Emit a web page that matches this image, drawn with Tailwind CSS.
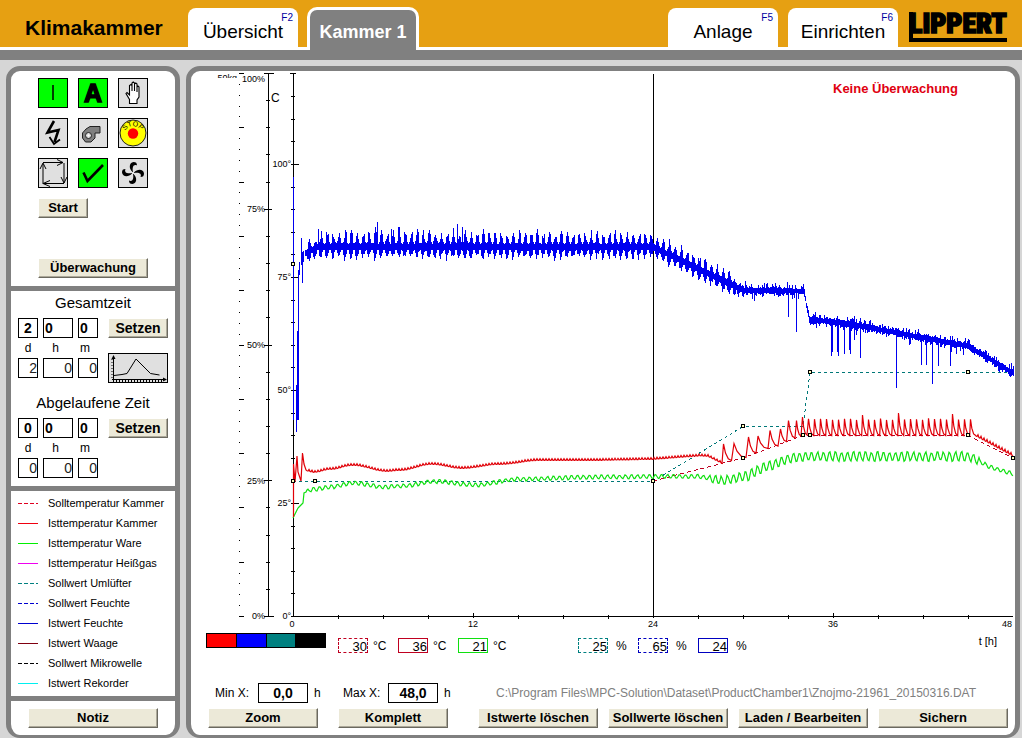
<!DOCTYPE html>
<html lang="de">
<head>
<meta charset="utf-8">
<title>Klimakammer</title>
<script src="https://cdn.jsdelivr.net/npm/@tailwindcss/browser@4"></script>
</head>
<body class="flex min-h-screen flex-col bg-[#d6d6d6] font-['Liberation_Sans',Arial,sans-serif] text-black">
<header class="flex h-[50px] items-end border-b-[3px] border-white bg-[#e6a012]">
  <h1 class="w-[188px] shrink-0 pb-[7px] pl-[25px] text-[21px] leading-6 font-bold">Klimakammer</h1>
  <nav class="flex flex-1 items-end">
    <a href="#uebersicht" class="relative h-[39px] w-[110px] rounded-t-lg bg-white pt-3 text-center text-[19px] leading-6">Übersicht<span class="absolute top-1 right-[5px] text-[10px] leading-3 text-[#0000a0]">F2</span></a>
    <a href="#kammer" aria-current="page" class="-mb-[3px] ml-[9px] h-[43px] w-[112px] rounded-t-[10px] border-3 border-b-0 border-white bg-[#808080] pt-[10px] text-center text-[18px] leading-6 font-bold text-white">Kammer 1</a>
    <a href="#anlage" class="relative ml-auto h-[39px] w-[110px] rounded-t-lg bg-white pt-3 text-center text-[19px] leading-6">Anlage<span class="absolute top-1 right-[5px] text-[10px] leading-3 text-[#0000a0]">F5</span></a>
    <a href="#einrichten" class="relative ml-[10px] h-[39px] w-[110px] rounded-t-lg bg-white pt-3 text-center text-[19px] leading-6">Einrichten<span class="absolute top-1 right-[5px] text-[10px] leading-3 text-[#0000a0]">F6</span></a>
  </nav>
  <svg class="mr-[14px] mb-[5px] ml-[11px] h-[34px] w-[99px] shrink-0 overflow-visible" viewBox="0 0 99 34" aria-label="Lippert">
    <text x="0" y="25" font-family="'Roboto Condensed','Open Sans Condensed','Liberation Sans Narrow','Liberation Sans',sans-serif" font-size="28" font-weight="900" stroke="#000" stroke-width="1.6">LIPPERT</text>
    <path d="M0 4h4v26h94v4H0z"/>
  </svg>
</header>
<div class="h-[10px] bg-[#808080]"></div>

<main class="flex flex-1 gap-[6px] pt-[6px] pr-[2px] pl-[6px]">
  <aside class="flex w-[174px] shrink-0 flex-col divide-y-5 divide-[#808080] rounded-[14px] border-5 border-b-3 border-[#808080] bg-white">
    <section class="px-[27px] pt-[7px] pb-2">
      <div class="grid w-[110px] grid-cols-3 gap-[10px]">
        <button aria-label="Ein" class="size-[30px] border border-black bg-[#00ff00]"><svg class="size-7" viewBox="0 0 28 28"><path d="M14 6v15" stroke="#000" stroke-width="1.5"/></svg></button>
        <button aria-label="Automatik" class="size-[30px] border border-black bg-[#00ff00]"><svg class="size-7" viewBox="0 0 28 28"><text x="14" y="23" text-anchor="middle" font-size="25" font-weight="bold" stroke="#000" stroke-width="1.500">A</text></svg></button>
        <button aria-label="Hand" class="size-[30px] border border-black bg-[#e0e0e0]"><svg class="size-7" viewBox="0 0 28 28"><path d="M10.500 24.500v-4L7 14.500l1-1 2.500 2.500V6.500l1.500-1 1 1V12V4l1.200-1L15.500 4v8V5l1.300-1L18 5v8V8l1-1 1 1v10l-2 3v3.500z" fill="#fff" stroke="#000" stroke-width="1.100"/></svg></button>
        <button aria-label="Spannung" class="size-[30px] border border-black bg-[#e0e0e0]"><svg class="size-7" viewBox="0 0 28 28" fill="none" stroke="#000" stroke-width="2.600"><path d="M15 2L8.500 13.500l11-2.500-4 12"/><path d="M10.500 18l4.500 7 6-4.500" stroke-width="1.800"/></svg></button>
        <button aria-label="Gebläse" class="size-[30px] border border-black bg-[#e0e0e0]"><svg class="size-7" viewBox="0 0 28 28"><path d="M7 10l4-2.500h10v6.500h-5v5l-4 4H6.500l-3-4v-5z" fill="#808080" stroke="#222"/><circle cx="9.500" cy="16.500" r="3" fill="#ddd" stroke="#222"/><circle cx="9.500" cy="16.500" r="1" fill="#fff"/></svg></button>
        <button aria-label="Stop" class="size-[30px] border border-black bg-[#e0e0e0]"><svg class="size-7" viewBox="0 0 28 28"><defs><path id="stopArc" d="M5.500 19a9 9 0 1 1 17 0"/></defs><circle cx="14" cy="14" r="13" fill="#ffff00" stroke="#222"/><circle cx="14" cy="14.500" r="5.200" fill="#ff0000"/><text font-size="7" font-family="Liberation Sans,sans-serif"><textPath href="#stopArc" startOffset="50%" text-anchor="middle">STOP</textPath></text></svg></button>
        <button aria-label="Umluft" class="size-[30px] border border-black bg-[#e0e0e0]"><svg class="size-7" viewBox="0 0 28 28" fill="none" stroke="#000"><path d="M4 25V5M1 10l3-6 3 6M4 3.500h20M18 .5l6 3-6 3M25 4v20M22 18l3 6 3-6M25 24.500H5M11 21.500l-7 3 7 3"/></svg></button>
        <button aria-label="Quittieren" class="size-[30px] border border-black bg-[#00ff00]"><svg class="size-7" viewBox="0 0 28 28"><path d="M4.500 13.500l4 8.500L24 6" fill="none" stroke="#000" stroke-width="2.600"/></svg></button>
        <button aria-label="Lüfter" class="size-[30px] border border-black bg-[#e0e0e0]"><svg class="size-7" viewBox="0 0 28 28"><path id="blade" d="M13.500 13C9.500 9.500 10 3.500 14.500 3c2.500 0 3.500 1 3.500 3.500-3.500-1.500-5 1.500-4 6.500z"/><use href="#blade" transform="rotate(90 14 14)"/><use href="#blade" transform="rotate(180 14 14)"/><use href="#blade" transform="rotate(270 14 14)"/></svg></button>
      </div>
      <button class="mt-[10px] block h-5 w-[50px] border border-t-white border-r-[#6b695f] border-b-[#6b695f] border-l-white bg-[#ece9d8] text-[13px] leading-4 font-bold shadow-[inset_-1px_-1px_#aca899]">Start</button>
      <button class="mt-10 block h-5 w-[110px] border border-t-white border-r-[#6b695f] border-b-[#6b695f] border-l-white bg-[#ece9d8] text-[13px] leading-4 font-bold shadow-[inset_-1px_-1px_#aca899]">Überwachung</button>
    </section>

    <section class="px-[7px] pt-1 pb-2">
      <h2 class="text-center text-[15px] leading-4">Gesamtzeit</h2>
      <div class="mt-[7px] flex h-5">
        <input aria-label="Gesamtzeit Tage" value="2" class="w-5 border border-black text-center text-[14px] leading-4 font-bold">
        <input aria-label="Gesamtzeit Stunden" value="0" class="ml-[5px] w-[30px] border border-black pl-px text-[14px] leading-4 font-bold">
        <input aria-label="Gesamtzeit Minuten" value="0" class="ml-[5px] w-5 border border-black pl-px text-[14px] leading-4 font-bold">
        <button class="ml-[10px] w-[60px] border border-t-white border-r-[#6b695f] border-b-[#6b695f] border-l-white bg-[#ece9d8] text-[14px] leading-4 font-bold shadow-[inset_-1px_-1px_#aca899]">Setzen</button>
      </div>
      <div class="flex">
        <div>
          <div class="flex h-5 items-center text-[12px]"><span class="w-5 text-center">d</span><span class="ml-[5px] w-[25px] text-center">h</span><span class="ml-[7px] w-5 text-center">m</span></div>
          <div class="flex h-5 text-right text-[14px] leading-[18px] text-[#222]">
            <output class="w-5 border border-black">2</output>
            <output class="ml-[5px] w-[30px] border border-black">0</output>
            <output class="ml-[5px] w-5 border border-black">0</output>
          </div>
        </div>
        <button aria-label="Kurve" class="mt-[15px] ml-[10px] h-[30px] w-[60px] border border-black bg-[#e0e0e0]"><svg class="h-7 w-[58px]" viewBox="0 0 58 28" fill="none" stroke="#000"><path d="M4.500 2v23M3 25.500h53"/><path d="M4 27h50" stroke-dasharray="1 2" stroke-width="2"/><path d="M3 5v20" stroke-dasharray="1 2"/><path d="M2.500 5l2-4 2 4zM54 23.500l4 2-4 2z" fill="#000" stroke="none"/><path d="M5 21.500l8-1 5-1 9-14.500 14.500 14.500 9 1.500"/></svg></button>
      </div>
      <h2 class="mt-3 text-center text-[15px] leading-4">Abgelaufene Zeit</h2>
      <div class="mt-[7px] flex h-5">
        <input aria-label="Abgelaufene Tage" value="0" class="w-5 border border-black text-center text-[14px] leading-4 font-bold">
        <input aria-label="Abgelaufene Stunden" value="0" class="ml-[5px] w-[30px] border border-black pl-px text-[14px] leading-4 font-bold">
        <input aria-label="Abgelaufene Minuten" value="0" class="ml-[5px] w-5 border border-black pl-px text-[14px] leading-4 font-bold">
        <button class="ml-[10px] w-[60px] border border-t-white border-r-[#6b695f] border-b-[#6b695f] border-l-white bg-[#ece9d8] text-[14px] leading-4 font-bold shadow-[inset_-1px_-1px_#aca899]">Setzen</button>
      </div>
      <div class="flex h-5 items-center text-[12px]"><span class="w-5 text-center">d</span><span class="ml-[5px] w-[25px] text-center">h</span><span class="ml-[7px] w-5 text-center">m</span></div>
      <div class="flex h-5 text-right text-[14px] leading-[18px] text-[#222]">
        <output class="w-5 border border-black">0</output>
        <output class="ml-[5px] w-[30px] border border-black">0</output>
        <output class="ml-[5px] w-5 border border-black">0</output>
      </div>
    </section>

    <section class="flex-1 px-[7px] pt-[2px] pb-[3px]">
      <ul class="text-[11px] leading-5">
        <li class="flex items-center gap-[10px]"><svg class="h-5 w-5" viewBox="0 0 20 20"><path d="M0 10.500h20" stroke="#e00020" stroke-dasharray="4 2"/></svg>Solltemperatur Kammer</li>
        <li class="flex items-center gap-[10px]"><svg class="h-5 w-5" viewBox="0 0 20 20"><path d="M0 10.500h20" stroke="#f00010"/></svg>Isttemperatur Kammer</li>
        <li class="flex items-center gap-[10px]"><svg class="h-5 w-5" viewBox="0 0 20 20"><path d="M0 10.500h20" stroke="#00f000"/></svg>Isttemperatur Ware</li>
        <li class="flex items-center gap-[10px]"><svg class="h-5 w-5" viewBox="0 0 20 20"><path d="M0 10.500h20" stroke="#f000f0"/></svg>Isttemperatur Heißgas</li>
        <li class="flex items-center gap-[10px]"><svg class="h-5 w-5" viewBox="0 0 20 20"><path d="M0 10.500h20" stroke="#008080" stroke-dasharray="4 2"/></svg>Sollwert Umlüfter</li>
        <li class="flex items-center gap-[10px]"><svg class="h-5 w-5" viewBox="0 0 20 20"><path d="M0 10.500h20" stroke="#0000d0" stroke-dasharray="4 2"/></svg>Sollwert Feuchte</li>
        <li class="flex items-center gap-[10px]"><svg class="h-5 w-5" viewBox="0 0 20 20"><path d="M0 10.500h20" stroke="#0000d0"/></svg>Istwert Feuchte</li>
        <li class="flex items-center gap-[10px]"><svg class="h-5 w-5" viewBox="0 0 20 20"><path d="M0 10.500h20" stroke="#800010"/></svg>Istwert Waage</li>
        <li class="flex items-center gap-[10px]"><svg class="h-5 w-5" viewBox="0 0 20 20"><path d="M0 10.500h20" stroke="#000" stroke-dasharray="4 2"/></svg>Sollwert Mikrowelle</li>
        <li class="flex items-center gap-[10px]"><svg class="h-5 w-5" viewBox="0 0 20 20"><path d="M0 10.500h20" stroke="#00f0f0"/></svg>Istwert Rekorder</li>
      </ul>
    </section>

    <section class="px-[17px] py-[7px]">
      <button class="block h-5 w-full border border-t-white border-r-[#6b695f] border-b-[#6b695f] border-l-white bg-[#ece9d8] text-[13px] leading-4 font-bold shadow-[inset_-1px_-1px_#aca899]">Notiz</button>
    </section>
  </aside>

  <section class="flex min-w-0 flex-1 flex-col rounded-[14px] border-5 border-b-3 border-[#808080] bg-white">
    <svg class="block w-full" viewBox="191 71 824 560" font-family="'Liberation Sans',Arial,sans-serif" font-size="9">
      <defs><clipPath id="topClip"><path d="M210 73h28v5h-28z"/></clipPath></defs>
      <g id="axes" shape-rendering="crispEdges" stroke="#000" fill="none"></g>
      <g text-anchor="end">
        <text x="237" y="81" clip-path="url(#topClip)">50kg</text>
        <text x="265" y="82">100%</text>
        <text x="265" y="212">75%</text>
        <text x="265" y="348">50%</text>
        <text x="265" y="484">25%</text>
        <text x="265" y="619">0%</text>
        <text x="291" y="167">100°</text>
        <text x="291" y="280">75°</text>
        <text x="291" y="393">50°</text>
        <text x="291" y="506">25°</text>
        <text x="291" y="619">0°</text>
      </g>
      <g text-anchor="middle">
        <text x="292" y="627">0</text>
        <text x="473" y="627">12</text>
        <text x="653" y="627">24</text>
        <text x="833" y="627">36</text>
        <text x="1007" y="627">48</text>
      </g>
      <text x="271" y="102" font-size="12">C</text>
      <text x="833" y="93" font-size="13" font-weight="bold" fill="#e00010">Keine Überwachung</text>
      <g id="curves" fill="none" stroke-width="1"></g>
      <g id="markers" fill="#ffffc0" stroke="#000" shape-rendering="crispEdges"></g>
    </svg>

    <div class="flex items-start pt-[2px] pr-[18px] pl-[15px]">
      <div class="flex h-[15px] w-[120px] divide-x divide-black border border-black">
        <i class="flex-1 bg-[#ff0000]"></i><i class="flex-1 bg-[#0000ff]"></i><i class="flex-1 bg-[#008080]"></i><i class="flex-1 bg-black"></i>
      </div>
      <div class="mt-[5px] ml-3 flex text-[12px] leading-4">
        <div class="flex w-[60px] gap-[5px]"><output class="h-[15px] w-[30px] border border-dashed border-[#c00020] text-right text-[13px]">30</output>°C</div>
        <div class="flex w-[60px] gap-[5px]"><output class="h-[15px] w-[30px] border border-[#c00020] text-right text-[13px]">36</output>°C</div>
        <div class="flex w-[60px] gap-[5px]"><output class="h-[15px] w-[30px] border border-[#10e010] text-right text-[13px]">21</output>°C</div>
        <div class="ml-[60px] flex w-[60px] gap-2"><output class="h-[15px] w-[30px] border border-dashed border-[#008080] text-right text-[13px]">25</output>%</div>
        <div class="flex w-[60px] gap-2"><output class="h-[15px] w-[30px] border border-dashed border-[#0000c0] text-right text-[13px]">65</output>%</div>
        <div class="flex w-[60px] gap-2"><output class="h-[15px] w-[30px] border border-[#0000c0] text-right text-[13px]">24</output>%</div>
      </div>
      <span class="mt-px ml-auto text-[11px] leading-[15px]">t [h]</span>
    </div>

    <div class="mt-[29px] flex h-5 items-center pr-6 pl-6 text-[12px]">
      <label for="minx" class="w-[43px]">Min X:</label>
      <input id="minx" value="0,0" class="h-5 w-[50px] border border-black text-center text-[14px] leading-4 font-bold">
      <span class="ml-[6px] w-[29px]">h</span>
      <label for="maxx" class="w-[45px]">Max X:</label>
      <input id="maxx" value="48,0" class="h-5 w-[50px] border border-black text-center text-[14px] leading-4 font-bold">
      <span class="ml-[6px]">h</span>
      <span class="ml-auto w-[495px] whitespace-nowrap text-[#808080]">C:\Program Files\MPC-Solution\Dataset\ProductChamber1\Znojmo-21961_20150316.DAT</span>
    </div>
    <div class="mt-[5px] flex h-5 pr-[7px] pl-[17px] text-[13px] font-bold whitespace-nowrap">
      <button class="w-[110px] border border-t-white border-r-[#6b695f] border-b-[#6b695f] border-l-white bg-[#ece9d8] leading-4 shadow-[inset_-1px_-1px_#aca899]">Zoom</button>
      <button class="ml-5 w-[110px] border border-t-white border-r-[#6b695f] border-b-[#6b695f] border-l-white bg-[#ece9d8] leading-4 shadow-[inset_-1px_-1px_#aca899]">Komplett</button>
      <button class="ml-auto w-[120px] border border-t-white border-r-[#6b695f] border-b-[#6b695f] border-l-white bg-[#ece9d8] leading-4 shadow-[inset_-1px_-1px_#aca899]">Istwerte löschen</button>
      <button class="ml-[10px] w-[120px] border border-t-white border-r-[#6b695f] border-b-[#6b695f] border-l-white bg-[#ece9d8] leading-4 shadow-[inset_-1px_-1px_#aca899]">Sollwerte löschen</button>
      <button class="ml-[10px] w-[130px] border border-t-white border-r-[#6b695f] border-b-[#6b695f] border-l-white bg-[#ece9d8] leading-4 shadow-[inset_-1px_-1px_#aca899]">Laden / Bearbeiten</button>
      <button class="ml-[10px] w-[130px] border border-t-white border-r-[#6b695f] border-b-[#6b695f] border-l-white bg-[#ece9d8] leading-4 shadow-[inset_-1px_-1px_#aca899]">Sichern</button>
    </div>
    <div class="h-[7px]"></div>
  </section>
</main>

<script>
const NS = 'http://www.w3.org/2000/svg';
function add(parent, d, attrs) {
  const p = document.createElementNS(NS, 'path');
  p.setAttribute('d', d);
  for (const k in attrs) p.setAttribute(k, attrs[k]);
  document.getElementById(parent).appendChild(p);
}
let seed = 7;
function rnd() { seed = (seed * 16807) % 2147483647; return seed / 2147483647; }
function lerp(pts, x, smooth) {
  for (let i = 1; i < pts.length; i++) if (x <= pts[i][0]) {
    const [a, b] = pts[i - 1], [c, e] = pts[i];
    let t = (x - a) / (c - a);
    if (smooth) t = (1 - Math.cos(Math.PI * t)) / 2;
    return b + (e - b) * t;
  }
  return pts[pts.length - 1][1];
}

// axes
let ax = 'M293.5 73V616.5M268.5 73V617M291 616.5H1013M653.5 74V616M264 73.500h10M290 73.500h6M264 616.500h10';
for (let i = 1; i < 24; i++) {
  const y = Math.round(616 - i * 22.6) + .5;
  ax += i % 5 ? `M291 ${y}h4` : `M291 ${y}h8`;
}
for (let i = 1; i < 20; i++) {
  const y = Math.round(616 - i * 27.15) + .5;
  ax += i % 5 ? `M266 ${y}h4` : `M264 ${y}h8`;
}
for (let i = 0; i <= 50; i++) {
  const y = Math.round(616 - i * 10.86) + .5;
  ax += i % 5 ? `M239 ${y}h1` : `M239 ${y}h5`;
}
for (let i = 1; i < 16; i++) ax += i % 4 ? `M${293 + i * 45 + .5} 615v4` : `M${293 + i * 45 + .5} 613v5`;
add('axes', ax, {});

// set points
add('curves', 'M293 481.500H653L743 426.500H803L810 372.500H1013', {stroke: '#007878', 'stroke-dasharray': '3 3', 'shape-rendering': 'crispEdges'});
add('curves', 'M653 481L743 458L803 435.500H968L1013 458', {stroke: '#c00020', 'stroke-dasharray': '4 3', 'shape-rendering': 'crispEdges'});

// product temperature
const gBase = [[293,518],[298,508],[301,505],[303,503],[304,493],[310,490],[330,487],[353,483],[385,487],[400,486],[437,481.5],[475,485],[520,479],[600,477],[653,476.5],[700,476.5],[722,481],[735,478],[748,476],[760,469],[775,464],[790,458],[803,456.5],[970,456.5],[990,467],[1013,474]];
let g = '';
for (let x = 293; x <= 1013; x++) {
  const amp = x < 306 ? 0 : x < 710 ? 2 : x < 980 ? 4.8 : 2;
  const y = lerp(gBase, x, x > 330 && x < 700) - amp * Math.sin(x * 2 * Math.PI / 6) * (.7 + .5 * rnd());
  g += (g ? 'L' : 'M') + x + ' ' + y.toFixed(1);
}
add('curves', g, {stroke: '#10e010', 'stroke-width': '1.2'});

// chamber temperature
const rBase = [[307,470.500],[314,472],[330,469],[353,465],[387,471],[400,470],[432,464],[462,468],[500,464],[540,460],[600,460],[653,459],[700,455.500],[708,456],[722,463]];
let r = 'M293.5 517V464L295 482L297 456L298 472L301 481L302.500 453L304 464L306 470';
for (let x = 307; x <= 722; x++) {
  const y = lerp(rBase, x, x > 314 && x < 540);
  r += `L${x} ${(y + (x % 3 ? .3 : -1.4)).toFixed(1)}`;
}
const peaks = [[723.5,444,460.5,731.5],[734,443.5,457.5,746],[748.5,437,453,756],[758,436,448.500,768],[770,430.5,446,778],[780.5,429,441.5,786.5],[788.5,420.500,438,795],[796.5,420.500,436,801],[802.5,417,435,807]];
for (let x = 808.5; x < 975; x += 6) {
  const tall = {862.5: 415, 898.5: 413, 952.5: 414};
  peaks.push([x, tall[x] || 418 + 2 * rnd(), 435.500, x + 5.2]);
}
for (const [px, py, ty, tx] of peaks)
  r += `L${px} ${py}L${px + (tx - px) * .25} ${py + (ty - py) * .55}L${px + (tx - px) * .6} ${py + (ty - py) * .9}L${tx} ${ty}`;
for (let x = 976; x <= 1013; x++) r += `L${x} ${(436 + (x - 976) * .54 - (x % 3 ? 0 : 2.4)).toFixed(1)}`;
add('curves', r, {stroke: '#e00008', 'stroke-width': '1.2'});

// humidity
const bBase = [[305,253],[310,250],[318,247],[653,247],[742,290],[804,291],[806,305],[809,319],[850,324],[968,346],[1013,373]];
let b = 'M293.5 177V420M296.5 432V385M297.5 420V395L298.500 270V420M299.500 275V262M301.500 265V238M302.500 283V252M303.500 262V251';
const drops = {788:317,796:332,831:356,832:352,837:352,838:356,844:354,849:350,850:354,854:340,860:358,896:388,921:365,926:365,932:384,938:366,950:366};
const highs = {377:222,391:229,457:224,462:227,398:227,318:229};
const up = [.1,.2,.75,1,.7,.2], dn = [.1,.6,1,.8,.5,.1];
for (let x = 305; x <= 1013; x++) {
  const c = lerp(bBase, x), p = x % 6;
  const au = x < 318 ? 9 : x < 480 ? 18 : x < 653 ? 16 : x < 735 ? 13 : 9;
  const ad = x < 653 ? 11 : x < 742 ? 10 : 9;
  const wave = x < 735;
  let t = c - 2 - (wave ? up[p] : rnd() * rnd()) * au * (.45 + .6 * rnd());
  let e = c + 2.5 + (wave ? dn[p] : rnd() * rnd()) * ad * (.45 + .6 * rnd());
  if (highs[x]) t = highs[x];
  if (drops[x]) e = drops[x];
  b += `M${x + .5} ${Math.round(t)}V${Math.round(e)}`;
}
add('curves', b, {stroke: '#0000f0', 'shape-rendering': 'crispEdges'});

// markers
for (const [x, y] of [[293,264],[293,481],[315,481],[653,481],[743,426],[743,458],[803,435],[810,435],[810,372],[968,372],[968,435],[1013,458]])
  add('markers', `M${x - 1.5} ${y - 1.5}h3v3h-3z`, {});
</script>
</body>
</html>
